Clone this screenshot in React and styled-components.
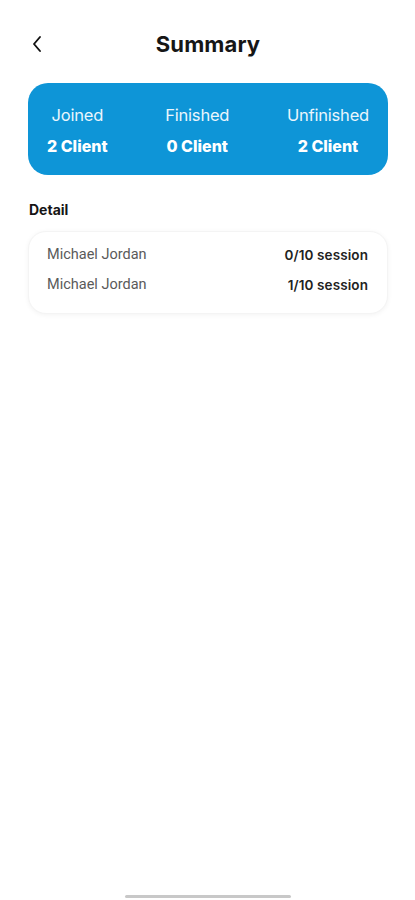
import styled, { createGlobalStyle } from 'styled-components';

const GlobalStyle = createGlobalStyle`
  html, body {
    margin: 0;
    padding: 0;
    background: #fff;
  }
  body {
    font-family: Inter, "Noto Sans", sans-serif;
  }
`;

const Screen = styled.div`
  width: 415px;
  height: 900px;
  display: flex;
  flex-direction: column;
  background: #fff;
  overflow: hidden;
`;

const Header = styled.div`
  display: grid;
  grid-template-columns: 60px 1fr 60px;
  align-items: center;
  height: 44px;
  margin-top: 22px;
  padding: 0 20px 0 31px;
`;

const BackButton = styled.button`
  border: none;
  background: none;
  padding: 0;
  width: 20px;
  height: 20px;
  display: flex;
  align-items: center;
  color: #111;
`;

const Title = styled.h1`
  margin: 0;
  text-align: center;
  font-size: 22px;
  font-weight: 700;
  color: #161616;
  letter-spacing: 0.1px;
  margin-left: -10px;
`;

const StatsCard = styled.div`
  margin: 17px 27px 0 28px;
  height: 92px;
  border-radius: 20px;
  background: #0e95d7;
  display: flex;
  justify-content: space-between;
  align-items: center;
  padding: 2px 19px 0;
  box-sizing: border-box;
`;

const Stat = styled.div`
  display: flex;
  flex-direction: column;
  align-items: center;
  gap: 11px;
  color: #fff;
`;

const StatLabel = styled.span`
  font-size: 16.5px;
  font-weight: 400;
  color: #eaf6fd;
  letter-spacing: -0.2px;
`;

const StatValue = styled.span`
  font-size: 16px;
  font-weight: 800;
  letter-spacing: 0px;
`;

const SectionTitle = styled.h2`
  margin: 26px 0 0 29px;
  font-size: 14px;
  font-weight: 700;
  color: #151515;
`;

const DetailCard = styled.div`
  margin: 13px 27px 0 28px;
  height: 83px;
  border-radius: 18px;
  background: #fff;
  box-shadow: 0 1px 5px rgba(0, 0, 0, 0.05);
  border: 1px solid #f4f4f4;
  box-sizing: border-box;
  display: flex;
  flex-direction: column;
  padding: 13px 19px 0 18px;
  gap: 11px;
`;

const Row = styled.div`
  display: flex;
  justify-content: space-between;
  align-items: center;
  height: 19px;
`;

const Name = styled.span`
  font-family: Roboto, "Liberation Sans", sans-serif;
  font-size: 14.5px;
  font-weight: 400;
  color: #5a5a5a;
`;

const Sessions = styled.span`
  font-size: 13.5px;
  font-weight: 600;
  color: #222;
  letter-spacing: 0.1px;
`;

const Spacer = styled.div`
  flex: 1;
`;

const HomeIndicator = styled.div`
  align-self: center;
  width: 166px;
  height: 3px;
  border-radius: 2px;
  background: #c8c8c8;
  margin-bottom: 2px;
`;

const stats = [
  { label: 'Joined', value: '2 Client' },
  { label: 'Finished', value: '0 Client' },
  { label: 'Unfinished', value: '2 Client' },
];

const details = [
  { name: 'Michael Jordan', done: 0, total: 10 },
  { name: 'Michael Jordan', done: 1, total: 10 },
];

const App = () => {
  return (
    <Screen>
      <GlobalStyle />
      <Header>
        <BackButton aria-label="Back">
          <svg width="12" height="18" viewBox="0 0 12 18" fill="none">
            <path d="M9 2L3 9l6 7" stroke="#111" strokeWidth="1.9" strokeLinecap="round" strokeLinejoin="round" />
          </svg>
        </BackButton>
        <Title>Summary</Title>
        <div />
      </Header>
      <StatsCard>
        {stats.map((s) => (
          <Stat key={s.label}>
            <StatLabel>{s.label}</StatLabel>
            <StatValue>{s.value}</StatValue>
          </Stat>
        ))}
      </StatsCard>
      <SectionTitle>Detail</SectionTitle>
      <DetailCard>
        {details.map((d, i) => (
          <Row key={i}>
            <Name>{d.name}</Name>
            <Sessions>
              {d.done}/{d.total} session
            </Sessions>
          </Row>
        ))}
      </DetailCard>
      <Spacer />
      <HomeIndicator />
    </Screen>
  );
};

export default App;
